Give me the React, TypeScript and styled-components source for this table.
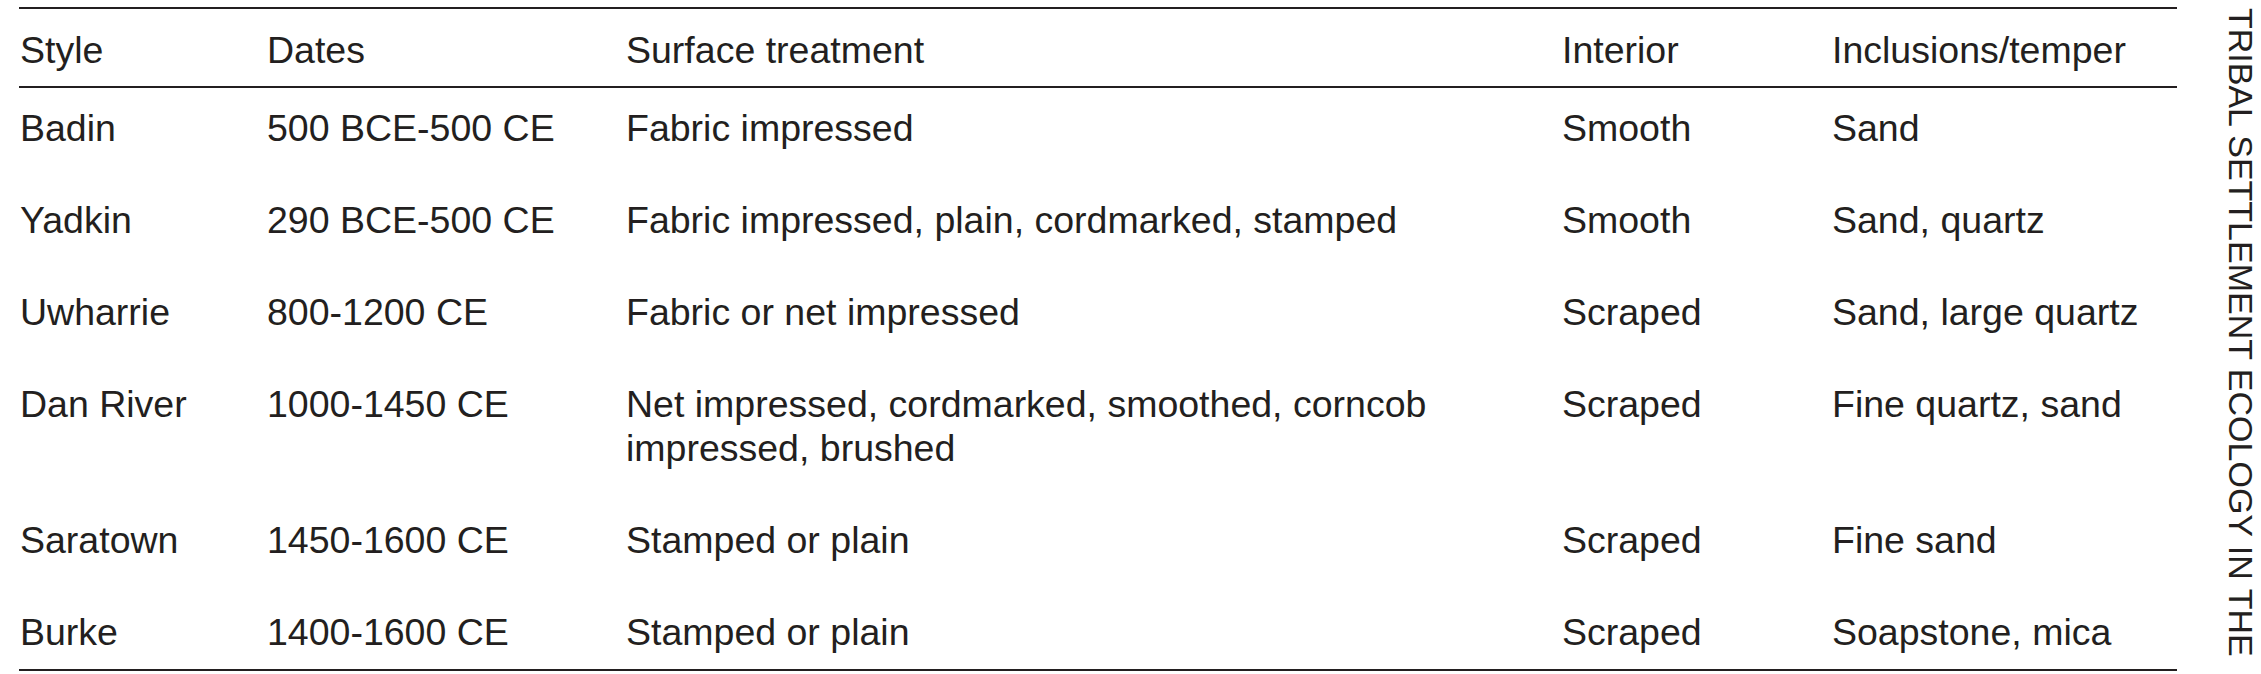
import styled, { createGlobalStyle } from 'styled-components';

const GlobalStyle = createGlobalStyle`
  html, body {
    margin: 0;
    padding: 0;
    background: #ffffff;
  }
  body {
    font-family: "Liberation Sans", Arial, Helvetica, sans-serif;
    color: #231f20;
  }
`;

const Page = styled.div`
  display: flex;
  flex-direction: row;
  align-items: flex-start;
  width: 2261px;
  height: 674px;
  padding: 7px 0 0 19px;
  box-sizing: border-box;
  overflow: hidden;
`;

const Table = styled.table`
  border-collapse: separate;
  border-spacing: 0;
  table-layout: fixed;
  width: 2158px;
  font-size: 37.5px;
  line-height: 44px;
`;

const HeadCell = styled.th<{ width: number }>`
  width: ${({ width }) => width}px;
  padding: 19px 1px 14px;
  border-top: 2px solid #231f20;
  border-bottom: 2px solid #231f20;
  text-align: left;
  font-weight: 400;
  vertical-align: top;
  box-sizing: border-box;
`;

const Cell = styled.td<{ isLast?: boolean; wide?: boolean }>`
  padding: 18px ${({ wide }) => (wide ? '80px' : '1px')} ${({ isLast }) => (isLast ? '15px' : '30px')} 1px;
  border-bottom: ${({ isLast }) => (isLast ? '2px solid #231f20' : 'none')};
  vertical-align: top;
  text-align: left;
`;

const SideTitle = styled.div`
  writing-mode: vertical-rl;
  margin-left: 47px;
  margin-top: 1px;
  font-size: 34px;
  line-height: 34px;
  white-space: nowrap;
  color: #231f20;
`;

const columns = [
  { label: 'Style', width: 247 },
  { label: 'Dates', width: 359 },
  { label: 'Surface treatment', width: 936 },
  { label: 'Interior', width: 270 },
  { label: 'Inclusions/temper', width: 346 },
];

const rows = [
  ['Badin', '500 BCE-500 CE', 'Fabric impressed', 'Smooth', 'Sand'],
  ['Yadkin', '290 BCE-500 CE', 'Fabric impressed, plain, cordmarked, stamped', 'Smooth', 'Sand, quartz'],
  ['Uwharrie', '800-1200 CE', 'Fabric or net impressed', 'Scraped', 'Sand, large quartz'],
  [
    'Dan River',
    '1000-1450 CE',
    'Net impressed, cordmarked, smoothed, corncob impressed, brushed',
    'Scraped',
    'Fine quartz, sand',
  ],
  ['Saratown', '1450-1600 CE', 'Stamped or plain', 'Scraped', 'Fine sand'],
  ['Burke', '1400-1600 CE', 'Stamped or plain', 'Scraped', 'Soapstone, mica'],
];

export default function App() {
  return (
    <>
      <GlobalStyle />
      <Page>
        <Table>
          <thead>
            <tr>
              {columns.map((col) => (
                <HeadCell key={col.label} width={col.width}>
                  {col.label}
                </HeadCell>
              ))}
            </tr>
          </thead>
          <tbody>
            {rows.map((row, i) => (
              <tr key={row[0]}>
                {row.map((value, j) => (
                  <Cell key={j} isLast={i === rows.length - 1} wide={j === 2}>
                    {value}
                  </Cell>
                ))}
              </tr>
            ))}
          </tbody>
        </Table>
        <SideTitle>TRIBAL SETTLEMENT ECOLOGY IN THE</SideTitle>
      </Page>
    </>
  );
}
